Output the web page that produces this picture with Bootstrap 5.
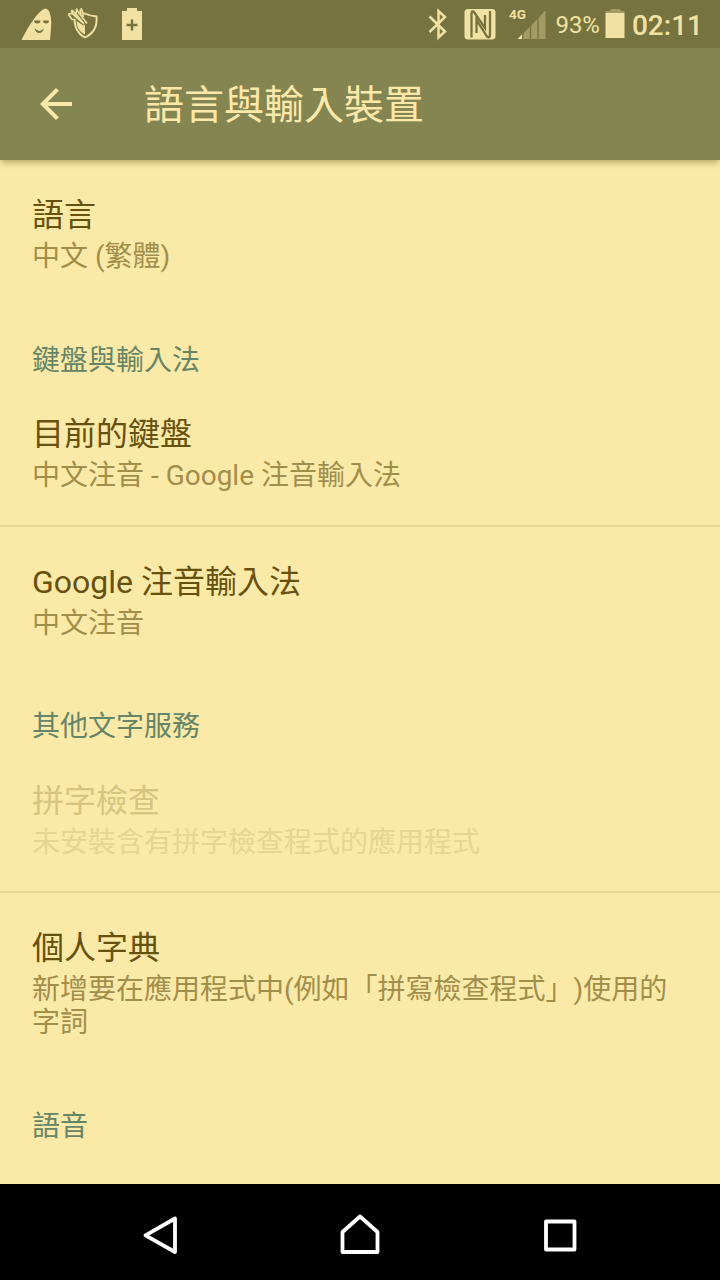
<!DOCTYPE html>
<html lang="zh-Hant">
<head>
<meta charset="utf-8">
<meta name="viewport" content="width=device-width, initial-scale=1">
<title>語言與輸入裝置</title>
<link href="https://cdn.jsdelivr.net/npm/bootstrap@5.3.0/dist/css/bootstrap.min.css" rel="stylesheet">
<style>
  body { font-family: Roboto, "Noto Sans CJK TC", sans-serif; background: #fbe9a8; height: 1280px; overflow: hidden; text-spacing-trim: space-all; }
  svg { display: block; flex: none; }
  .status-bar { height: 48px; background: #77733f; color: #f1e2a4; padding: 0 17px 0 20px; }
  .battery-level { font-size: 24px; line-height: 48px; margin-left: 8px; padding-top: 1px; height: 48px; }
  .battery-icon { margin-left: 5px; }
  .clock { font-size: 28px; font-weight: 500; line-height: 48px; padding-top: 1.5px; height: 48px; margin-left: 7px; }
  .app-bar { height: 112px; background: #858551; color: #fce9a9; box-shadow: 0 4px 6px -1px rgba(90,75,10,.38); padding-left: 32px; z-index: 2; }
  .app-title { font-size: 40px; line-height: 48px; margin: 4px 0 0 64px; font-weight: 400; }
  .settings { font-size: 28px; line-height: 33px; }
  .setting { height: 146px; padding: 35px 32px 0; color: #a18e4b; }
  .setting.off { height: 145px; color: #e6d593; }
  .setting.tall { height: 179px; }
  .setting h2 { font-size: 32px; line-height: 40px; margin: 0 0 5px; font-weight: 400; color: #67510f; }
  .setting.off h2 { color: #d6c481; }
  .ruled { border-top: 2px solid #e8d697; height: 147px; }
  .ruled.tall { height: 181px; }
  .group-title { height: 74px; padding: 38px 32px 0; font-size: 28px; line-height: 33px; margin: 0; font-weight: 400; color: #668566; }
  .group-title.snug { height: 73px; }
  .nav-keys { height: 96px; }
</style>
</head>
<body class="d-flex flex-column">
<header class="status-bar d-flex align-items-center flex-shrink-0">
  <svg width="130" height="48" viewBox="20 0 130 48" fill="#f1e2a4">
    <path d="M21.500 40C27 29 34 17 41 11Q46 6 49 11Q52 17 51 28L50 40Z"/>
    <path d="M34 20.500h6.500q0 3-3.200 3t-3.300-3M43 20.500h6q0 3-3 3t-3-3M34.500 28q5.500 6 9.500 0-1 5-5 5-3.500 0-4.500-5" fill="#77733f"/>
    <path d="M85 13.500q5 2.500 11.500 3c1 10.500-3 17-11.500 21C77 33.500 74 27 74.500 16q6-.5 10.500-2.500Z" fill="none" stroke="#f1e2a4" stroke-width="1.900"/>
    <path d="M85 17v17.500c-6-3-8.500-7.500-8.500-15Z"/>
    <path d="m69 14 16 10M77 9l10 14" fill="none" stroke="#77733f" stroke-width="4"/>
    <path d="m68 14 4.500-.5L84 24M71.500 10l1 3.500M76 9l11 14.500M80 9.500l1 5" fill="none" stroke="#f1e2a4" stroke-width="1.700"/>
    <path d="m68.500 14.500 3.500 5h5M72 10l12 13M77 8.500l-1 5M81 8l2 5 0 4" fill="none" stroke="#f1e2a4" stroke-width="1.600"/>
    <path d="m78 14.500 8 10M75 18.500l8 6" fill="none" stroke="#77733f" stroke-width="1"/>
    <path d="M122 11h5V8h10v3h5v29h-20Z"/>
    <path d="M132 19.500v11M126.500 25h11" stroke="#77733f" stroke-width="2.500"/>
  </svg>
  <svg class="ms-auto" width="120" height="48" viewBox="427 0 120 48" fill="#f1e2a4">
    <path d="m429.500 16.500 15.500 15-6.500 6V11l6.500 6-15.500 15" fill="none" stroke="#f1e2a4" stroke-width="2.500"/>
    <rect x="464.500" y="9" width="31" height="30.500" rx="3.500"/>
    <path d="M471.500 37.500V14q0-4 2.500-2L485 28V15M476.500 33V20L487 36.500q3 2.500 3-2.500V11" fill="none" stroke="#77733f" stroke-width="2.300"/>
    <text x="509" y="18.500" font-size="12.500" font-weight="700" textLength="17" lengthAdjust="spacingAndGlyphs">4G</text>
    <path d="M518 39l27.500-28.500V39Z" fill="#a39b63"/>
    <path d="M517.500 39l4.500-4.500V39Z"/>
    <path d="M522.800 28v12M530.500 20v20M538 12v28" stroke="#77733f" stroke-width="1.300"/>
  </svg>
  <span class="battery-level">93%</span>
  <svg class="battery-icon" width="20" height="48" viewBox="605 0 20 48" fill="#f1e2a4">
    <path d="M605.500 13v-2h5V9h10v2h4v2Z" fill="#a39b63"/><path d="M605.500 13h19v25h-19Z"/>
  </svg>
  <span class="clock">02:11</span>
</header>
<nav class="app-bar d-flex align-items-center flex-shrink-0 position-relative" aria-label="語言與輸入裝置">
  <svg width="48" height="48" viewBox="0 0 24 24" fill="#fce9a9"><path d="M20 11H7.830l5.590-5.590L12 4l-8 8 8 8 1.410-1.410L7.830 13H20v-2z"/></svg>
  <h1 class="app-title">語言與輸入裝置</h1>
</nav>
<main class="settings flex-grow-1 overflow-hidden">
  <section class="setting"><h2>語言</h2><div>中文 (繁體)</div></section>
  <h3 class="group-title snug">鍵盤與輸入法</h3>
  <section class="setting"><h2>目前的鍵盤</h2><div>中文注音 - Google 注音輸入法</div></section>
  <section class="setting ruled"><h2>Google 注音輸入法</h2><div>中文注音</div></section>
  <h3 class="group-title">其他文字服務</h3>
  <section class="setting off"><h2>拼字檢查</h2><div>未安裝含有拼字檢查程式的應用程式</div></section>
  <section class="setting ruled tall"><h2>個人字典</h2><div>新增要在應用程式中(例如「拼寫檢查程式<span class="d-inline-block">」</span>)使用的字詞</div></section>
  <h3 class="group-title">語音</h3>
</main>
<footer class="nav-keys bg-black flex-shrink-0 d-flex justify-content-center align-items-center">
  <svg width="440" height="96" viewBox="140 1184 440 96" fill="none" stroke="#fff" stroke-width="3.800" stroke-linejoin="round">
    <path d="M175 1218.500v33.500l-29.500-16.700Z"/>
    <path d="M360 1216.500l17.500 15.500v20h-35v-20Z"/>
    <path d="M546 1221.500h28.500v28H546Z"/>
  </svg>
</footer>
<script src="https://cdn.jsdelivr.net/npm/bootstrap@5.3.0/dist/js/bootstrap.bundle.min.js"></script>
</body>
</html>
